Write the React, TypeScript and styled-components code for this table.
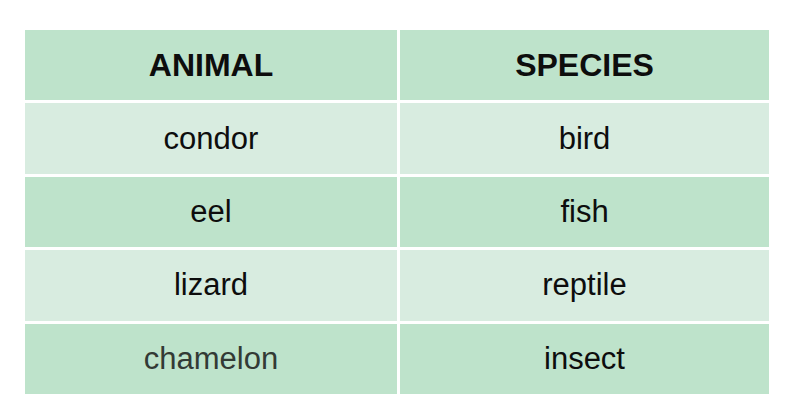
import React from 'react'
import styled, { createGlobalStyle } from 'styled-components'

const GlobalStyle = createGlobalStyle`
  body {
    margin: 0;
    background: #ffffff;
    font-family: 'Liberation Sans', Arial, sans-serif;
  }
`

const dark = '#bee3cb'
const light = '#d8ece0'

const Page = styled.div`
  padding: 30px 0 0 25px;
`

const Table = styled.div`
  display: grid;
  grid-template-columns: 372px 369px;
  grid-auto-rows: 70.4px;
  gap: 3px;
  width: 744px;
`

const Cell = styled.div<{ $shade: 'dark' | 'light'; $head?: boolean; $muted?: boolean }>`
  display: flex;
  align-items: center;
  justify-content: center;
  background: ${(p) => (p.$shade === 'dark' ? dark : light)};
  font-size: ${(p) => (p.$head ? '32px' : '31px')};
  font-weight: ${(p) => (p.$head ? 700 : 400)};
  color: ${(p) => (p.$muted ? '#333a35' : '#0d0d0d')};
`

const rows = [
  { animal: 'condor', species: 'bird' },
  { animal: 'eel', species: 'fish' },
  { animal: 'lizard', species: 'reptile' },
  { animal: 'chamelon', species: 'insect', muted: true },
]

export default function App() {
  return (
    <>
      <GlobalStyle />
      <Page>
        <Table>
          <Cell $shade="dark" $head>ANIMAL</Cell>
          <Cell $shade="dark" $head>SPECIES</Cell>
          {rows.map((r, i) => {
            const shade = i % 2 === 0 ? 'light' : 'dark'
            return (
              <React.Fragment key={r.animal}>
                <Cell $shade={shade} $muted={r.muted}>{r.animal}</Cell>
                <Cell $shade={shade}>{r.species}</Cell>
              </React.Fragment>
            )
          })}
        </Table>
      </Page>
    </>
  )
}
